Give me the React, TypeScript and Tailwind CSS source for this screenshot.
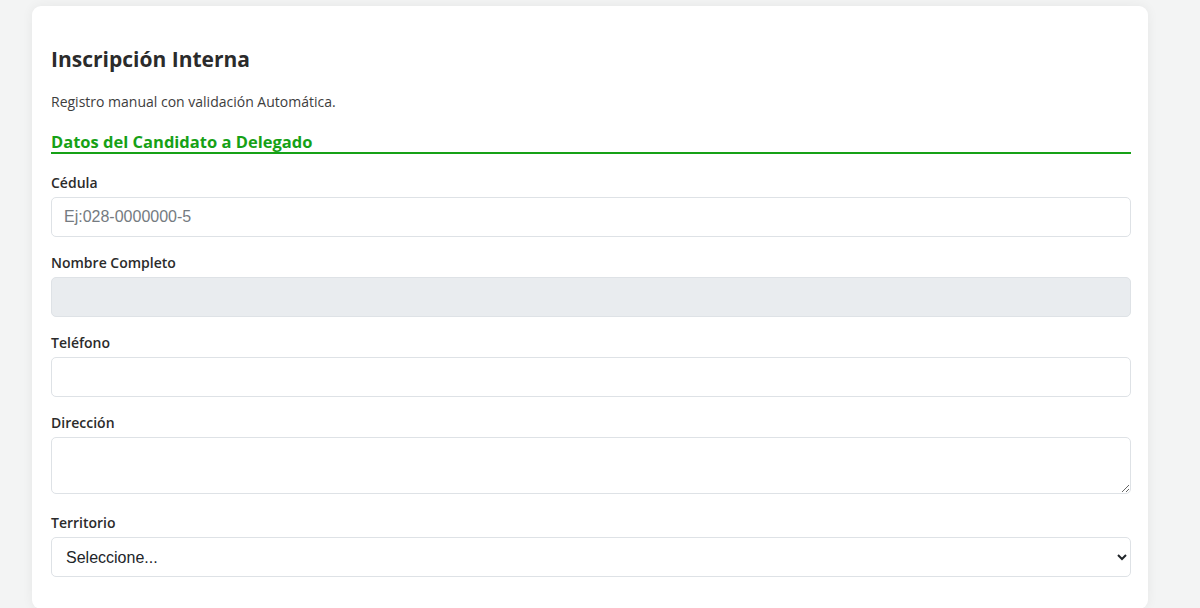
import { useState } from "react";

const fieldClass =
  "block w-full rounded-[5px] border border-[#dee2e6] px-3 text-[16px] text-[#212529] outline-none placeholder:text-[#757b81] [font-family:'Liberation_Sans',Arial,sans-serif]";

function Label({ children }: { children: React.ReactNode }) {
  return (
    <label className="mb-[4px] block text-[14px] font-semibold leading-[20px] text-[#2b2b2b]">
      {children}
    </label>
  );
}

export default function App() {
  const [cedula, setCedula] = useState("");

  return (
    <div className="min-h-screen bg-[#f3f4f4] px-[32px] pt-[6px] [font-family:'Open_Sans','Noto_Sans',sans-serif]">
      <div className="w-[1116px] rounded-[9px] bg-white pb-8 pl-[19px] pr-[17px] pt-[30px] shadow-[0_0_12px_rgba(0,0,0,0.06)]">
        <h1 className="text-[21px] font-bold leading-[46px] text-[#2b2b2b]">Inscripción Interna</h1>
        <p className="mt-[10px] text-[14px] leading-[20px] text-[#3d3d3d]">
          Registro manual con validación Automática.
        </p>
        <h2 className="mt-[19px] border-b-2 border-[#16a116] text-[16.5px] font-bold leading-[21px] text-[#16a116]">
          Datos del Candidato a Delegado
        </h2>

        <div className="mt-[19px]">
          <Label>Cédula</Label>
          <input
            className={`${fieldClass} h-[40px] bg-white`}
            placeholder="Ej:028-0000000-5"
            value={cedula}
            onChange={(e) => setCedula(e.target.value)}
          />
        </div>

        <div className="mt-[16px]">
          <Label>Nombre Completo</Label>
          <input className={`${fieldClass} h-[40px] bg-[#e9ecef]`} disabled />
        </div>

        <div className="mt-[16px]">
          <Label>Teléfono</Label>
          <input className={`${fieldClass} h-[40px] bg-white`} />
        </div>

        <div className="mt-[16px]">
          <Label>Dirección</Label>
          <textarea className={`${fieldClass} h-[57px] bg-white py-2`} />
        </div>

        <div className="mt-[19px]">
          <Label>Territorio</Label>
          <select className={`${fieldClass} h-[40px] bg-white !pl-[10px]`} defaultValue="">
            <option value="">Seleccione...</option>
            <option value="norte">Norte</option>
            <option value="sur">Sur</option>
          </select>
        </div>
      </div>
    </div>
  );
}
